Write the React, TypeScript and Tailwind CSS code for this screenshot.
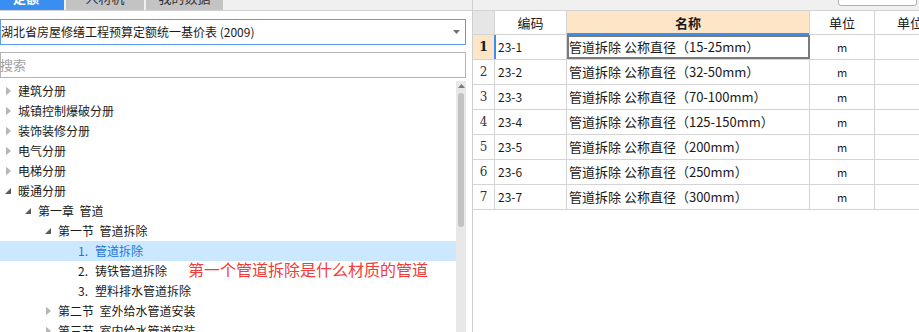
import React from 'react'

const font = { fontFamily: '"Noto Sans CJK SC", "Noto Sans", sans-serif' }

type Node = { level: number; label: string; kind: 'closed' | 'open' | 'leaf'; num?: string; selected?: boolean }

const tree: Node[] = [
  { level: 0, label: '建筑分册', kind: 'closed' },
  { level: 0, label: '城镇控制爆破分册', kind: 'closed' },
  { level: 0, label: '装饰装修分册', kind: 'closed' },
  { level: 0, label: '电气分册', kind: 'closed' },
  { level: 0, label: '电梯分册', kind: 'closed' },
  { level: 0, label: '暖通分册', kind: 'open' },
  { level: 1, label: '第一章  管道', kind: 'open' },
  { level: 2, label: '第一节  管道拆除', kind: 'open' },
  { level: 3, label: '管道拆除', kind: 'leaf', num: '1.', selected: true },
  { level: 3, label: '铸铁管道拆除', kind: 'leaf', num: '2.' },
  { level: 3, label: '塑料排水管道拆除', kind: 'leaf', num: '3.' },
  { level: 2, label: '第二节  室外给水管道安装', kind: 'closed' },
  { level: 2, label: '第三节  室内给水管道安装', kind: 'closed' },
]

const rows = [
  { code: '23-1', name: '管道拆除 公称直径（15-25mm）' },
  { code: '23-2', name: '管道拆除 公称直径（32-50mm）' },
  { code: '23-3', name: '管道拆除 公称直径（70-100mm）' },
  { code: '23-4', name: '管道拆除 公称直径（125-150mm）' },
  { code: '23-5', name: '管道拆除 公称直径（200mm）' },
  { code: '23-6', name: '管道拆除 公称直径（250mm）' },
  { code: '23-7', name: '管道拆除 公称直径（300mm）' },
]

function Arrow({ kind }: { kind: Node['kind'] }) {
  if (kind === 'leaf') return <span className="w-[16px] shrink-0" />
  if (kind === 'open')
    return (
      <span className="w-[16px] shrink-0 flex items-center pl-[3px]">
        <svg width="7" height="7" viewBox="0 0 7 7">
          <polygon points="6,0 6,6 0,6" fill="#5b5b5b" />
        </svg>
      </span>
    )
  return (
    <span className="w-[16px] shrink-0 flex items-center pl-[4px]">
      <svg width="5" height="8" viewBox="0 0 5 8">
        <polygon points="0.5,0.5 4.5,4 0.5,7.5" fill="#b8b8b8" stroke="#a0a0a0" strokeWidth="0.6" />
      </svg>
    </span>
  )
}

export default function App() {
  return (
    <div className="w-[919px] h-[332px] overflow-hidden flex bg-white text-[12px] text-[#1a1a1a] relative" style={font}>
      {/* left: quota library tree */}
      <div className="w-[472px] shrink-0 flex flex-col">
        <div className="h-[11px] bg-[#f0f0f0] border-b border-[#d2d2d2] overflow-hidden flex gap-[2px]">
          <div className="w-[64px] h-[24px] -mt-[14px] bg-[#3a8ef2] text-white font-bold text-[13px] flex items-center pl-[13px]">定额</div>
          <div className="w-[78px] h-[24px] -mt-[14px] bg-[#c3c3c3] text-[#333] text-[13px] flex items-center justify-center">人材机</div>
          <div className="w-[77px] h-[24px] -mt-[14px] bg-[#c3c3c3] text-[#333] text-[13px] flex items-center justify-center">我的数据</div>
        </div>

        <div className="mt-[8px] w-[466px] h-[26px] border border-[#5a9cf0] flex items-center justify-between pr-[5px]">
          <span className="whitespace-nowrap">湖北省房屋修缮工程预算定额统一基价表 (2009)</span>
          <svg width="7" height="4" viewBox="0 0 7 4">
            <polygon points="0,0 7,0 3.5,4" fill="#707070" />
          </svg>
        </div>

        <div className="mt-[7px] w-[466px] h-[26px] border border-[#b4b4b4] flex items-center">
          <span className="text-[#a0a0a0] text-[13px] -ml-[1px]">搜索</span>
        </div>

        <div className="mt-[3px] flex flex-1 min-h-0">
          <div className="w-[456px]">
            {tree.map((n, i) => (
              <div
                key={i}
                className={`h-[20px] flex items-center whitespace-pre ${n.selected ? 'bg-[#cce8ff] text-[#1b74e0]' : ''}`}
                style={{ paddingLeft: n.level * 20 + 2 }}
              >
                <Arrow kind={n.kind} />
                {n.num && <span className="w-[17px] shrink-0">{n.num}</span>}
                <span>{n.label}</span>
              </div>
            ))}
          </div>
          <div className="w-[10px] bg-[#e8e8e8] flex flex-col items-center">
            <svg className="mt-[3px]" width="7" height="4" viewBox="0 0 7 4">
              <polygon points="0,4 7,4 3.5,0" fill="#7a7a7a" />
            </svg>
            <div className="mt-[5px] w-[6px] h-[134px] rounded-[3px] bg-[#c2c2c2]" />
          </div>
        </div>
      </div>

      {/* right: quota table */}
      <div className="flex-1 flex flex-col border-l border-[#cfcfcf]">
        <div className="h-[11px] bg-[#f0f0f0] border-b border-[#d2d2d2] flex justify-end overflow-hidden">
          <div className="w-[79px] h-[16px] -mt-[10px] mr-[6px] bg-white border border-[#b0b0b0] rounded-[3px]" />
        </div>

        <div className="flex h-[24px] border-b border-[#d4d4d4]">
          <div className="w-[22px] shrink-0 bg-[#e6e6e6] border-r border-[#d4d4d4]" />
          <div className="w-[72px] shrink-0 border-r border-[#d4d4d4] flex items-center justify-center text-[13px]">编码</div>
          <div className="w-[243px] shrink-0 border-r border-[#d4d4d4] bg-[#fde6c8] flex items-center justify-center font-bold text-[13px] relative">
            名称
            <div className="absolute left-0 right-0 -bottom-[1px] h-[2px] bg-[#3d8ef0]" />
          </div>
          <div className="w-[65px] shrink-0 border-r border-[#d4d4d4] flex items-center justify-center text-[13px]">单位</div>
          <div className="flex-1 flex items-center pl-[22px] text-[13px] whitespace-nowrap overflow-hidden">单位</div>
        </div>

        {rows.map((r, i) => {
          const first = i === 0
          return (
            <div key={r.code} className="flex h-[25px] border-b border-[#d4d4d4]">
              <div className={`w-[22px] shrink-0 border-r border-[#d4d4d4] flex items-center justify-center ${first ? 'bg-[#fde6c8] font-bold text-[13px]' : 'text-[#333]'}`} style={{ fontFamily: '"DejaVu Serif", serif' }}>
                {i + 1}
              </div>
              <div className="w-[72px] shrink-0 border-r border-[#d4d4d4] flex items-center pl-[3px] relative">
                {first && <div className="absolute -left-[1px] top-0 bottom-0 w-[2px] bg-[#3d8ef0]" />}
                {r.code}
              </div>
              <div className={`w-[243px] shrink-0 border-r border-[#d4d4d4] flex items-center pl-[2px] whitespace-nowrap text-[13px] ${first ? 'outline outline-2 -outline-offset-2 outline-[#7a7a7a]' : ''}`}>
                {r.name}
              </div>
              <div className="w-[65px] shrink-0 border-r border-[#d4d4d4] flex items-center justify-center text-[11px]">m</div>
              <div className="flex-1" />
            </div>
          )
        })}
      </div>

      {/* annotation */}
      <div className="absolute left-[188px] top-[257px] text-[16px] text-[#f53a3a] whitespace-nowrap">
        第一个管道拆除是什么材质的管道
      </div>
    </div>
  )
}
